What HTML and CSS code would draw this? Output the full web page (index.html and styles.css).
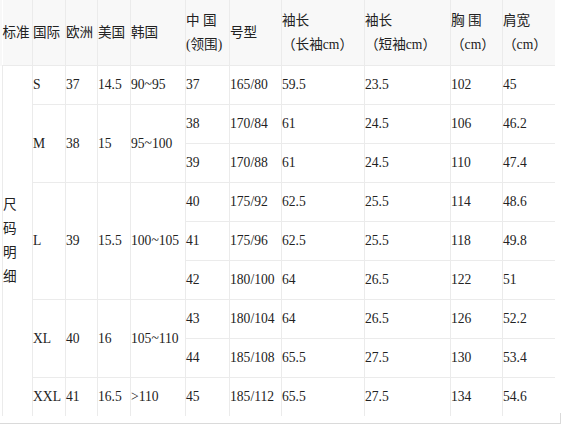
FILE: index.html
```html
<!DOCTYPE html>
<html lang="zh-CN">
<head>
<meta charset="utf-8">
<title>尺码明细</title>
<link rel="stylesheet" href="styles.css">
</head>
<body>
<div class="sheet">
  <table class="size-table">
    <colgroup>
      <col class="c1"><col class="c2"><col class="c3"><col class="c4"><col class="c5"><col class="c6"><col class="c7"><col class="c8"><col class="c9"><col class="c10"><col class="c11">
    </colgroup>
    <thead>
      <tr>
        <th>标准</th>
        <th>国际</th>
        <th>欧洲</th>
        <th>美国</th>
        <th>韩国</th>
        <th>中 国<br>(领围)</th>
        <th>号型</th>
        <th>袖长<br>（长袖cm）</th>
        <th>袖长<br>（短袖cm）</th>
        <th>胸 围<br>（cm）</th>
        <th>肩宽<br>（cm）</th>
      </tr>
    </thead>
    <tbody>
      <tr>
        <td rowspan="9" class="label">尺码明细</td>
        <td>S</td><td>37</td><td>14.5</td><td>90~95</td>
        <td>37</td><td>165/80</td><td>59.5</td><td>23.5</td><td>102</td><td>45</td>
      </tr>
      <tr>
        <td rowspan="2">M</td><td rowspan="2">38</td><td rowspan="2">15</td><td rowspan="2">95~100</td>
        <td>38</td><td>170/84</td><td>61</td><td>24.5</td><td>106</td><td>46.2</td>
      </tr>
      <tr>
        <td>39</td><td>170/88</td><td>61</td><td>24.5</td><td>110</td><td>47.4</td>
      </tr>
      <tr>
        <td rowspan="3">L</td><td rowspan="3">39</td><td rowspan="3">15.5</td><td rowspan="3">100~105</td>
        <td>40</td><td>175/92</td><td>62.5</td><td>25.5</td><td>114</td><td>48.6</td>
      </tr>
      <tr>
        <td>41</td><td>175/96</td><td>62.5</td><td>25.5</td><td>118</td><td>49.8</td>
      </tr>
      <tr>
        <td>42</td><td>180/100</td><td>64</td><td>26.5</td><td>122</td><td>51</td>
      </tr>
      <tr>
        <td rowspan="2">XL</td><td rowspan="2">40</td><td rowspan="2">16</td><td rowspan="2">105~110</td>
        <td>43</td><td>180/104</td><td>64</td><td>26.5</td><td>126</td><td>52.2</td>
      </tr>
      <tr>
        <td>44</td><td>185/108</td><td>65.5</td><td>27.5</td><td>130</td><td>53.4</td>
      </tr>
      <tr>
        <td>XXL</td><td>41</td><td>16.5</td><td>&gt;110</td>
        <td>45</td><td>185/112</td><td>65.5</td><td>27.5</td><td>134</td><td>54.6</td>
      </tr>
    </tbody>
  </table>
</div>
</body>
</html>
```
FILE: styles.css
```css
html, body {
  margin: 0;
  padding: 0;
  background: #ffffff;
}

body {
  font-family: "Liberation Serif", "Noto Sans CJK SC", serif;
  font-size: 13.6px;
  color: #222222;
}

.sheet {
  position: relative;
  width: 561px;
  height: 423px;
  border-bottom: 1px solid #dadada;
  background: linear-gradient(#f8f8f8, #f8f8f8) no-repeat 0 0 / 2px 66px;
}

.sheet::after {
  content: "";
  position: absolute;
  right: 0;
  bottom: 0;
  width: 1px;
  height: 10px;
  background: #dadada;
}

.size-table {
  margin-left: 2px;
  width: 552px;
  table-layout: fixed;
  border-collapse: collapse;
}

.c1 { width: 30px; }
.c2 { width: 33px; }
.c3 { width: 32px; }
.c4 { width: 33px; }
.c5 { width: 55px; }
.c6 { width: 44px; }
.c7 { width: 52px; }
.c8 { width: 83px; }
.c9 { width: 86px; }
.c10 { width: 52px; }
.c11 { width: 52px; }

.size-table th,
.size-table td {
  padding: 0;
  text-align: left;
  vertical-align: middle;
  white-space: nowrap;
  font-weight: normal;
}

.size-table th {
  height: 65px;
  line-height: 24px;
  background: #f8f8f8;
  border-left: 1px solid #ebebeb;
}

.size-table th:first-child {
  border-left: none;
}

.size-table td {
  height: 38px;
  line-height: 20px;
  border-left: 1px solid #ebebeb;
  border-top: 1px solid #ebebeb;
}

.size-table td.label {
  white-space: normal;
  width: 14px;
  line-height: 24px;
  word-break: break-all;
  padding-right: 14px;
}
```
